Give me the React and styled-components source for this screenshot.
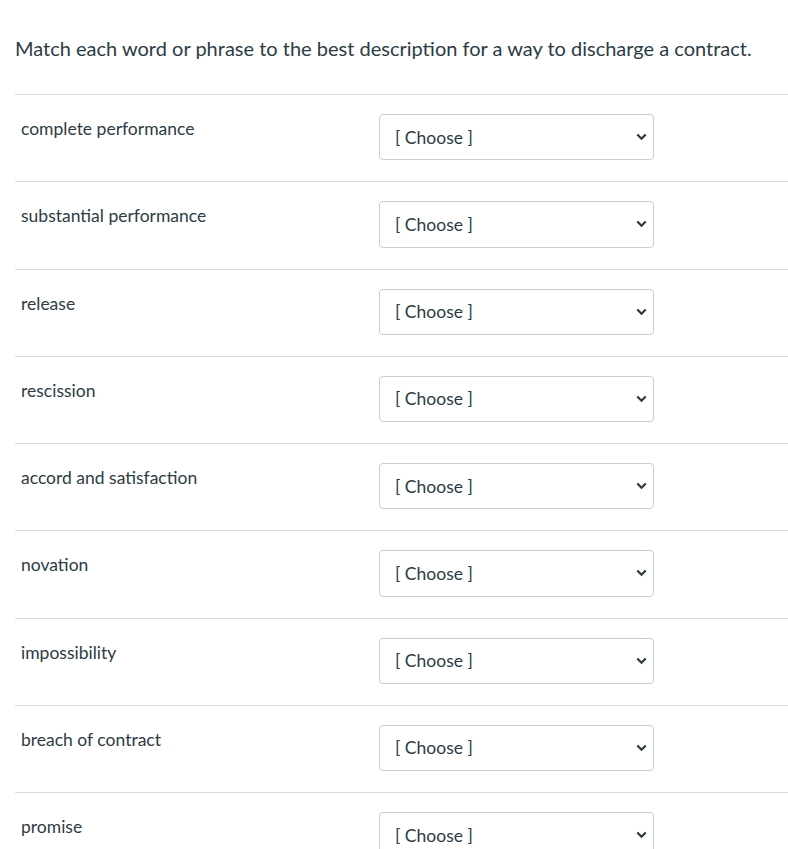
import React from "react";
import styled, { createGlobalStyle } from "styled-components";

const Global = createGlobalStyle`
  html, body { margin: 0; padding: 0; background: #fff; }
  body { font-family: Lato, "Helvetica Neue", Arial, sans-serif; color: #2d3b45; }
`;

const Page = styled.div`
  padding: 0 0 0 15px;
`;

const Title = styled.p`
  margin: 0;
  padding-top: 36px;
  height: 94px;
  box-sizing: border-box;
  font-size: 20px;
  line-height: 24px;
  color: #2d3b45;
`;

const Row = styled.div`
  display: flex;
  align-items: flex-start;
  border-top: 1px solid #dcdcdc;
  padding: 19px 0 21px;
  height: 46.25px;
  box-sizing: content-box;
`;

const Label = styled.div`
  width: 358px;
  padding-left: 6px;
  padding-top: 3px;
  font-size: 17.5px;
  line-height: 24px;
  color: #2d3b45;
`;

const Select = styled.div`
  box-sizing: border-box;
  width: 275px;
  height: 46.25px;
  border: 1px solid #c7cdd1;
  border-radius: 4px;
  display: flex;
  align-items: center;
  justify-content: space-between;
  padding: 0 6px 0 15px;
  font-size: 17.5px;
  color: #2d3b45;
  background: #fff;
`;

const Chevron = () => (
  <svg width="11" height="8" viewBox="0 0 11 8">
    <path d="M1.3 1.5 L5.5 5.7 L9.7 1.5" fill="none" stroke="#2d3b45" strokeWidth="2.3" />
  </svg>
);

const items = [
  "complete performance",
  "substantial performance",
  "release",
  "rescission",
  "accord and satisfaction",
  "novation",
  "impossibility",
  "breach of contract",
  "promise",
];

export default function App() {
  return (
    <Page>
      <Global />
      <Title>Match each word or phrase to the best description for a way to discharge a contract.</Title>
      {items.map((t) => (
        <Row key={t}>
          <Label>{t}</Label>
          <Select>
            <span>[ Choose ]</span>
            <Chevron />
          </Select>
        </Row>
      ))}
    </Page>
  );
}
